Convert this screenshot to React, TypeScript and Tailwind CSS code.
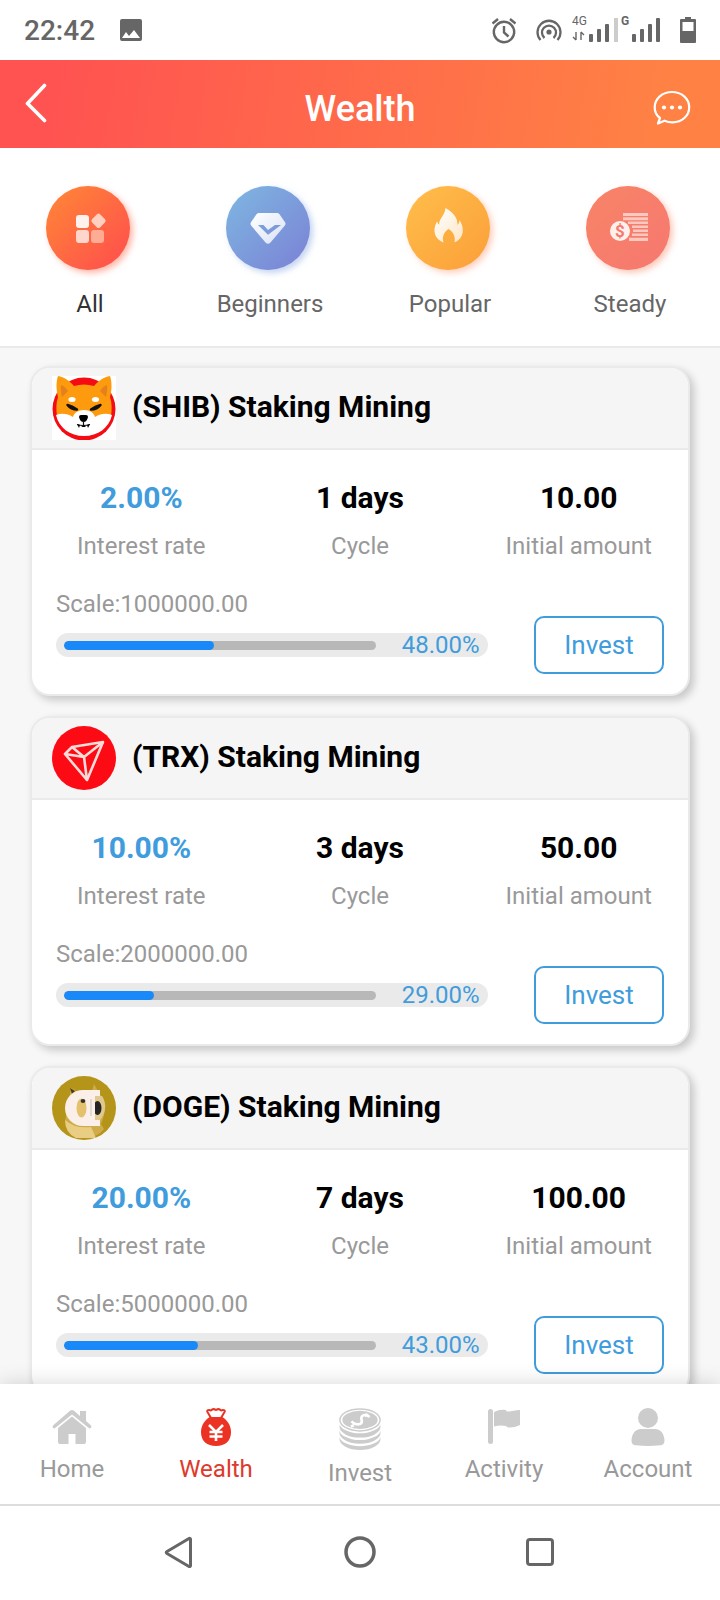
import type { ReactNode } from "react"
import clsx from "clsx"

type Plan = {
  coin: string
  logo: ReactNode
  rate: string
  cycle: string
  amount: string
  scale: string
  progress: number
}

function StatusBar() {
  return (
    <div className="flex h-[60px] shrink-0 items-center justify-between bg-white px-6 pt-0.5 text-[#666]">
      <div className="flex items-center gap-6">
        <span className="text-[28px] leading-8 font-medium">22:42</span>
        <svg className="h-6 w-6" viewBox="0 0 24 24" fill="currentColor">
          <path fillRule="evenodd" d="M3 0h18a2 2 0 0 1 2 2v18a2 2 0 0 1-2 2H3a2 2 0 0 1-2-2V2a2 2 0 0 1 2-2Zm0 19h18l-6-8-5 6-3-4Z" />
        </svg>
      </div>
      <div className="flex items-center">
        <svg className="mr-[18px] h-7 w-7" viewBox="0 0 28 28" fill="none" stroke="currentColor" strokeWidth="2.4">
          <circle cx="14" cy="15" r="10.200" />
          <path d="M14 9v6.500l4.500 4M2.500 6.500 8 2M25.500 6.500 20 2" />
        </svg>
        <svg className="mr-2 h-7 w-7" viewBox="0 0 28 28" fill="none" stroke="currentColor" strokeWidth="2.300">
          <circle cx="13" cy="15" r="2.600" fill="currentColor" stroke="none" />
          <path d="M8.500 21a7 7 0 1 1 9 0M4.500 23a11.500 11.500 0 1 1 17 0" />
        </svg>
        <svg className="h-9 w-[92px]" viewBox="0 -2 92 36" fill="currentColor">
          <text x="0" y="10" fontSize="12">4G</text>
          <text x="49" y="10" fontSize="12" fontWeight="700">G</text>
          <path d="M4 17v8M1 22l3 3M9 25v-8M12 20l-3-3" stroke="currentColor" strokeWidth="1.400" fill="none" />
          <rect x="17" y="19" width="4" height="8" rx="1" />
          <rect x="25" y="14" width="4" height="13" rx="1" />
          <rect x="33" y="9" width="4" height="18" rx="1" />
          <rect x="42" y="3" width="4" height="24" fill="#ccc" />
          <rect x="60" y="19" width="4" height="8" rx="1" />
          <rect x="68" y="14" width="4" height="13" rx="1" />
          <rect x="76" y="9" width="4" height="18" rx="1" />
          <rect x="84" y="3" width="4" height="24" rx="1" />
        </svg>
        <svg className="ml-4 h-7 w-4" viewBox="0 0 16 28" fill="currentColor">
          <path fillRule="evenodd" d="M5 0h6v2h4a1 1 0 0 1 1 1v22a1 1 0 0 1-1 1H1a1 1 0 0 1-1-1V3a1 1 0 0 1 1-1h4ZM2.500 5v9h11V5Z" />
        </svg>
      </div>
    </div>
  )
}

function Header() {
  return (
    <header className="grid h-[88px] shrink-0 grid-cols-[1fr_auto_1fr] items-center bg-linear-[100deg,#ff5351_8%,#ff8244_92%] px-6 text-white">
      <button aria-label="Back" className="mb-0.5 justify-self-start">
        <svg className="h-10 w-6" viewBox="0 0 24 40" fill="none" stroke="currentColor" strokeWidth="3.600" strokeLinecap="round" strokeLinejoin="round">
          <path d="M20.500 2.500 3.500 20.500l17 17" />
        </svg>
      </button>
      <h1 className="pt-2.5 text-[36px] leading-10 font-medium">Wealth</h1>
      <button aria-label="Messages" className="mr-1 mt-1.5 justify-self-end">
        <svg className="h-9 w-10" viewBox="0 0 40 36" fill="none" stroke="currentColor" strokeWidth="2.200" strokeLinejoin="round">
          <path d="M8 29C4.500 26.500 2.700 22.500 2.700 18.500 2.700 9.500 10.500 3 20 3s17.200 6.500 17.200 15.200S30 33.300 20.500 33.300c-3 0-5.500-.5-8-1.600L6 34.500Z" />
          <g fill="currentColor" stroke="none">
            <circle cx="12" cy="18.500" r="2.100" />
            <circle cx="20" cy="18.500" r="2.100" />
            <circle cx="28" cy="18.500" r="2.100" />
          </g>
        </svg>
      </button>
    </header>
  )
}

// The round badge sits a little left of the middle, its shadow takes the other side.
function Badge({ id, from, to, shadow, children }: { id: string; from: string; to: string; shadow: string; children: ReactNode }) {
  return (
    <svg className="h-[104px] w-[104px]" viewBox="0 0 104 104">
      <defs>
        <linearGradient id={id} x1="0.1" y1="0.1" x2="0.9" y2="0.9">
          <stop offset="0" stopColor={from} />
          <stop offset="1" stopColor={to} />
        </linearGradient>
        <linearGradient id={`${id}-glyph`} x1="0" y1="0" x2="1" y2="1">
          <stop offset="0" stopColor="#fff" />
          <stop offset="1" stopColor="#fff" stopOpacity="0.7" />
        </linearGradient>
        <filter id={`${id}-blur`} x="-20%" y="-20%" width="140%" height="140%">
          <feGaussianBlur stdDeviation="3" />
        </filter>
      </defs>
      <circle cx="53" cy="53" r="42" fill={shadow} filter={`url(#${id}-blur)`} />
      <circle cx="50" cy="50" r="42" fill={`url(#${id})`} />
      <g fill={`url(#${id}-glyph)`}>{children}</g>
    </svg>
  )
}

const categories = [
  {
    name: "All",
    badge: (
      <Badge id="all" from="#ff8238" to="#ff524c" shadow="#ffb5a6">
        <rect x="38" y="37" width="13" height="13" rx="3" fill="#fff2ee" />
        <rect x="38" y="52" width="13" height="13" rx="3" fill="#ffd6cb" />
        <rect x="53" y="52" width="13" height="13" rx="3" fill="#ffac94" />
        <rect x="55" y="37" width="11.500" height="11.500" rx="2.500" fill="#ffcfc0" transform="rotate(45 60.500 42.500)" />
      </Badge>
    ),
  },
  {
    name: "Beginners",
    badge: (
      <Badge id="beginners" from="#7eb2e0" to="#7b86d6" shadow="#c3d3f1">
        <path fillRule="evenodd" d="M41 35h18q1.500 0 2.500 1.200l5.500 8q1.200 1.800-.3 3.500L52.500 64.500q-2.500 2.500-5 0L33.300 47.700q-1.500-1.700-.3-3.500l5.500-8q1-1.200 2.500-1.200ZM40 47l10 9.800L63 47h-6l-7 5-4.500-5Z" />
      </Badge>
    ),
  },
  {
    name: "Popular",
    badge: (
      <Badge id="popular" from="#ffbb49" to="#fba23a" shadow="#ffcfbd">
        <path d="M47.500 30c8 4.500 12 9.500 12 17 1.500-1.500 2-3.200 2-5 5.500 8.500 4.500 18.500-5 22.500 1.300-6-1.500-11-6-13.500-5 3.500-6.500 8-5 13.500-9-3.500-11.500-12-6.500-21 .6 1.500 1.200 2.500 2.200 3.200C40.500 41 47 37.500 47.500 30Z" />
      </Badge>
    ),
  },
  {
    name: "Steady",
    badge: (
      <Badge id="steady" from="#f88368" to="#f6796f" shadow="#fbc8b7">
        <path d="M45 35h25v3H45ZM45 39.200h25v3H45ZM50 43.400h20v2.600H50ZM54 47.500h16V50H54ZM55 51.500h15V54H55ZM54 55.500h16V58H54ZM51 59.800h19V63H51Z" fill="#fcc8bf" />
        <circle cx="42" cy="53" r="10" fill="#fff0ec" />
        <text x="42" y="59" textAnchor="middle" fontSize="17" fontWeight="700" fill="#f6796f">$</text>
      </Badge>
    ),
  },
]

function ShibLogo() {
  return (
    <svg className="h-16 w-16" viewBox="0 0 64 64">
      <path d="M0 0h64v64H0Z" fill="#fff" />
      <circle cx="32" cy="33" r="31.500" fill="#f50b12" />
      <path d="M6 0c6 1 12 5 16 10q10-3 20 0C46 5 52 1 58 0c2 6 2 14 0 21 2 6 2 12 1 19L32 54 5 40c-1-7-1-13 1-19C4 14 4 6 6 0Z" fill="#fd9a0d" />
      <path d="M9 9c3 1 5 3 7 6l-6 6c-1-4-1.500-8-1-12ZM55 9c-3 1-5 3-7 6l6 6c1-4 1.500-8 1-12Z" fill="#e5811c" />
      <path d="M4 39c5-2 11-2 17 2 1-4 5-7 11-7s10 3 11 7c6-4 12-4 17-2-3 13-14 21-28 21S7 52 4 39Z" fill="#fff" />
      <ellipse cx="20" cy="23.500" rx="3.600" ry="2.500" fill="#fff" />
      <ellipse cx="43.500" cy="23.500" rx="3.600" ry="2.500" fill="#fff" />
      <path d="M15.500 29q4.500 1 9.500 4.500-6 0-9.500-4.500ZM48.500 29q-4.500 1-9.500 4.500 6 0 9.500-4.500Z" stroke="#111" strokeWidth="2.400" strokeLinejoin="round" />
      <path d="M27 41q0-2 2-2h5q2 0 2 2-1 5-4.500 5T27 41Z" />
      <path d="M31.500 45v4M25 48.500q6 2 13 0" stroke="#111" strokeWidth="1.200" fill="none" />
      <path d="m25 48 2 4 1-3ZM38 48l-2 4-1-3ZM29 51h5l-2-2Z" />
    </svg>
  )
}

function TrxLogo() {
  return (
    <svg className="h-16 w-16" viewBox="0 0 64 64">
      <circle cx="32" cy="32" r="32" fill="#fd0b15" />
      <g fill="none" stroke="#ffdcd9" strokeWidth="2.600" strokeLinejoin="round">
        <path d="M20 21 51 16 35 54 13 28Z" />
        <path d="m13 28 19 3L20 21M51 16 32 31l3 23" />
      </g>
    </svg>
  )
}

function DogeLogo() {
  return (
    <svg className="h-16 w-16" viewBox="0 0 64 64">
      <defs>
        <clipPath id="doge-clip">
          <circle cx="32" cy="32" r="32" />
        </clipPath>
      </defs>
      <g clipPath="url(#doge-clip)">
        <path d="M0 0h64v64H0Z" fill="#b5941a" />
        <path d="M19 12q4 1 6 4l15-1q1-3 2-7 3 5 4 8 6 6 7 14 0 9-4 18l3 5q-6 8-18 9-16-1-21-17Z" fill="#cfac4a" />
        <path d="M13 44q10 9 26 7l5 11H24Q13 57 13 44Z" fill="#e9cd83" />
        <path d="m18 12 5 3-3 3Z" fill="#4b3c20" />
        <path d="M40 20h10q4 6 3 13t-5 11h-8Z" fill="#e0c98f" />
        <ellipse cx="45.500" cy="32" rx="4" ry="7" fill="#242424" />
        <path d="M31 14h17v6h-5v24h5v6H31a18 18 0 0 1 0-36Z" fill="#fbefe9" />
        <ellipse cx="29.500" cy="32" rx="5" ry="9.500" fill="#e3c16d" />
        <rect x="38" y="23" width="2" height="17" fill="#e2d9d2" />
        <ellipse cx="31" cy="25" rx="2.400" ry="2" fill="#333" />
      </g>
    </svg>
  )
}

const plans: Plan[] = [
  { coin: "SHIB", logo: <ShibLogo />, rate: "2.00%", cycle: "1 days", amount: "10.00", scale: "1000000.00", progress: 48 },
  { coin: "TRX", logo: <TrxLogo />, rate: "10.00%", cycle: "3 days", amount: "50.00", scale: "2000000.00", progress: 29 },
  { coin: "DOGE", logo: <DogeLogo />, rate: "20.00%", cycle: "7 days", amount: "100.00", scale: "5000000.00", progress: 43 },
]

function Stat({ value, label, highlight }: { value: string; label: string; highlight?: boolean }) {
  return (
    <div className="flex flex-col items-center gap-3">
      <dd className={clsx("text-[30px] leading-9 font-bold", highlight ? "text-[#409cdc]" : "text-black")}>{value}</dd>
      <dt className="order-last text-2xl leading-9 text-[#999]">{label}</dt>
    </div>
  )
}

function PlanCard({ plan }: { plan: Plan }) {
  return (
    <article className="shrink-0 overflow-hidden rounded-[20px] border-2 border-[#eaeaea] bg-white shadow-[4px_4px_8px_rgba(0,0,0,0.2)]">
      <div className="flex h-[82px] items-center gap-4 border-b-2 border-[#eaeaea] bg-[#f5f5f5] px-5">
        {plan.logo}
        <h2 className="pb-0.5 text-[30px] leading-9 font-bold text-black">({plan.coin}) Staking Mining</h2>
      </div>
      <dl className="grid grid-cols-3 pt-[30px]">
        <Stat value={plan.rate} label="Interest rate" highlight />
        <Stat value={plan.cycle} label="Cycle" />
        <Stat value={plan.amount} label="Initial amount" />
      </dl>
      <div className="flex items-end justify-between px-6 pt-6 pb-5">
        <div className="mb-[17px] w-[71%]">
          <p className="text-2xl leading-8 text-[#999]">Scale:{plan.scale}</p>
          <div className="mt-[13px] flex h-6 items-center rounded-full bg-[#eaeaea] px-2">
            <div className="h-[9px] flex-1 overflow-hidden rounded-full bg-[#b8b8b8]">
              <div className="h-full rounded-full bg-[#1989fa]" style={{ width: `${plan.progress}%` }} />
            </div>
            <span className="ml-[26px] text-2xl leading-6 text-[#409cdc]">{plan.progress.toFixed(2)}%</span>
          </div>
        </div>
        <button className="h-[58px] w-[130px] rounded-[10px] border-2 border-[#409cdc] text-[26px] leading-8 text-[#409cdc]">Invest</button>
      </div>
    </article>
  )
}

const tabs = [
  {
    name: "Home",
    icon: (
      <svg className="h-[38px] w-10" viewBox="0 0 40 38" fill="#ccc">
        <path d="M20 2q1 0 2 .8l6 5.200V3h6v10l5 4.500q1 1-.2 2.500-1 .8-2 0L20 6.500 3.200 20q-1 .8-2 0-1.200-1.500-.2-2.500L18 2.800q1-.8 2-.8Z" />
        <path d="M20 8.500 34 20v14q0 2-2 2h-8.500V26h-7v10H8q-2 0-2-2V20Z" />
      </svg>
    ),
  },
  {
    name: "Wealth",
    icon: (
      <svg className="h-[38px] w-10" viewBox="0 0 40 38">
        <path d="M15 10 11.500 4q-1-2 1.500-2 1 0 2 .5Q17 0 20 2q3-2 5 .5 1-.5 2-.5 2.500 0 1.500 2L25 10Z" fill="#fff" stroke="#ec3222" strokeWidth="2" strokeLinejoin="round" />
        <path d="M14 9h12c5 2.500 9 8.500 9 15 0 9-6 14-15 14S5 33 5 24c0-6.500 4-12.500 9-15Z" fill="#ec3222" />
        <path d="m13 17 7 7 7-7M20 23v10M13.500 24h13M13.500 28.500h13" fill="none" stroke="#fff" strokeWidth="2.600" />
      </svg>
    ),
    active: true,
  },
  {
    name: "Invest",
    icon: (
      <svg className="h-[42px] w-11" viewBox="0 0 44 44">
        <ellipse cx="22" cy="32.500" rx="21.500" ry="11.500" fill="#ccc" />
        <ellipse cx="22" cy="28.500" rx="22" ry="11.500" fill="#fff" />
        <ellipse cx="22" cy="26" rx="21.500" ry="11.500" fill="#ccc" />
        <ellipse cx="22" cy="22" rx="22" ry="11.500" fill="#fff" />
        <ellipse cx="22" cy="19.500" rx="21.500" ry="11.500" fill="#ccc" />
        <ellipse cx="22" cy="15" rx="22" ry="11.500" fill="#fff" />
        <ellipse cx="22" cy="12.500" rx="21" ry="11.500" fill="#fff" stroke="#ccc" strokeWidth="1.500" />
        <ellipse cx="22" cy="12.500" rx="18.500" ry="9.500" fill="#ccc" />
        <path d="M32 9.500c-3-3.500-8-2.500-8.500.5-.5 3 2 5-1 6.500-2.500 1-6.500.5-9.500-2.500M30 6.500l-3 2M15.500 18l-3 1.500" fill="none" stroke="#fff" strokeWidth="2.800" />
      </svg>
    ),
  },
  {
    name: "Activity",
    icon: (
      <svg className="h-[38px] w-10" viewBox="0 0 40 38" fill="#ccc">
        <rect x="4" y="1" width="5" height="35" rx="2.500" />
        <path d="M10 4q6-3 12-2c0 1 1 1.500 2 1.500 4 0 7-1.500 12-1.500v15q-6 3-12 2.500c-1-2-8-3-14-1Z" />
      </svg>
    ),
  },
  {
    name: "Account",
    icon: (
      <svg className="h-[38px] w-10" viewBox="0 0 40 38" fill="#ccc">
        <circle cx="20" cy="10" r="10" />
        <path d="M13 21h14c6 0 9 5 9.500 11 0 4-1.500 5-4.500 5.300q-12 1.400-24 0c-3-.3-4.500-1.300-4.500-5.300C4 26 7 21 13 21Z" />
      </svg>
    ),
  },
]

function TabBar() {
  return (
    <nav className="z-10 grid h-[122px] shrink-0 grid-cols-5 items-start border-b-2 border-[#ddd] bg-white pt-6 shadow-[0_0_20px_rgba(0,0,0,0.16)]">
      {tabs.map((tab) => (
        <a key={tab.name} href="#" className={clsx("flex flex-col items-center gap-[9px] text-2xl leading-7", tab.active ? "text-[#dd3a2c]" : "text-[#999]")}>
          {tab.icon}
          {tab.name}
        </a>
      ))}
    </nav>
  )
}

function SystemBar() {
  return (
    <div className="z-20 flex h-[94px] shrink-0 items-center justify-center gap-[148px] bg-white pb-0.5 text-[#666]">
      <button aria-label="System back">
        <svg className="h-8 w-8" viewBox="0 0 32 32" fill="none" stroke="currentColor" strokeWidth="3" strokeLinejoin="round">
          <path d="M26.500 3.500v26a1 1 0 0 1-1.500 1L3 17.500q-1.500-1 0-2L25 2.500a1 1 0 0 1 1.500 1Z" />
        </svg>
      </button>
      <button aria-label="System home">
        <svg className="h-8 w-8" viewBox="0 0 32 32" fill="none" stroke="currentColor" strokeWidth="3.500">
          <circle cx="16" cy="16" r="14" />
        </svg>
      </button>
      <button aria-label="Recent apps">
        <svg className="h-8 w-8" viewBox="0 0 32 32" fill="none" stroke="currentColor" strokeWidth="3">
          <rect x="3.500" y="3.500" width="25" height="25" rx="2.500" />
        </svg>
      </button>
    </div>
  )
}

export default function App() {
  return (
    <div className="flex h-screen flex-col overflow-hidden bg-[#f7f7f7] font-[Roboto,sans-serif]">
      <StatusBar />
      <Header />
      <div className="grid h-[200px] shrink-0 grid-cols-4 border-b-2 border-[#eaeaea] bg-white pt-[30px]">
        {categories.map((category, i) => (
          <button key={category.name} className={clsx("flex flex-col items-center gap-1 text-2xl leading-9", i === 0 ? "text-[#333]" : "text-[#666]")}>
            {category.badge}
            {category.name}
          </button>
        ))}
      </div>
      <main className="flex min-h-0 flex-1 flex-col gap-5 overflow-y-auto px-[30px] pt-[18px] [scrollbar-width:none]">
        {plans.map((plan) => (
          <PlanCard key={plan.coin} plan={plan} />
        ))}
      </main>
      <TabBar />
      <SystemBar />
    </div>
  )
}
